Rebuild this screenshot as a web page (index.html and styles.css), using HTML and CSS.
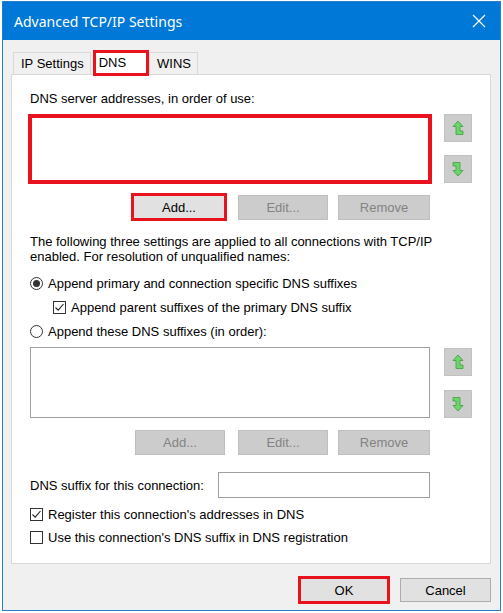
FILE: index.html
```html
<!DOCTYPE html>
<html>
<head>
<meta charset="utf-8">
<link rel="stylesheet" href="styles.css">
</head>
<body>
<div class="window">
  <div class="titlebar">
    <span class="title">Advanced TCP/IP Settings</span>
    <svg class="close" width="14" height="14" viewBox="0 0 14 14"><path d="M1 1L13 13M13 1L1 13" stroke="#fff" stroke-width="1.2" fill="none"/></svg>
  </div>
  <div class="body">
    <div class="tabs">
      <div class="tab">IP Settings</div>
      <div class="tab active">DNS</div>
      <div class="tab">WINS</div>
    </div>
    <div class="panel">
      <div class="label">DNS server addresses, in order of use:</div>
      <div class="listrow">
        <div class="list hl-list"></div>
        <div class="arrows">
          <div class="arrowbtn"><svg width="12" height="16" viewBox="0 0 12 16"><path d="M6 1L11 6.5H8V11H11V14.5H4V6.5H1Z" fill="#6fd46f" stroke="#3c9f3c" stroke-width="0.8" stroke-linejoin="round"/></svg></div>
          <div class="arrowbtn gap1"><svg width="12" height="16" viewBox="0 0 12 16"><path d="M1 1.5H8V9.5H11L6 15L1 9.5H4V5H1Z" fill="#6fd46f" stroke="#3c9f3c" stroke-width="0.8" stroke-linejoin="round"/></svg></div>
        </div>
      </div>
      <div class="btnrow top">
        <div class="hl-btn"><div class="btn">Add...</div></div>
        <div class="btn dis edit">Edit...</div>
        <div class="btn dis remove">Remove</div>
      </div>
      <p class="para">The following three settings are applied to all connections with TCP/IP enabled. For resolution of unqualified names:</p>
      <div class="opt radio1"><span class="radio on"></span>Append primary and connection specific DNS suffixes</div>
      <div class="opt check1 indent"><span class="check"><svg width="11" height="11" viewBox="0 0 11 11"><path d="M1.5 5.5L4.2 8.2L9.5 2" stroke="#222" stroke-width="1.1" fill="none"/></svg></span>Append parent suffixes of the primary DNS suffix</div>
      <div class="opt radio2"><span class="radio"></span>Append these DNS suffixes (in order):</div>
      <div class="listrow second">
        <div class="list plain-list"></div>
        <div class="arrows two">
          <div class="arrowbtn"><svg width="12" height="16" viewBox="0 0 12 16"><path d="M6 1L11 6.5H8V11H11V14.5H4V6.5H1Z" fill="#6fd46f" stroke="#3c9f3c" stroke-width="0.8" stroke-linejoin="round"/></svg></div>
          <div class="arrowbtn gap2"><svg width="12" height="16" viewBox="0 0 12 16"><path d="M1 1.5H8V9.5H11L6 15L1 9.5H4V5H1Z" fill="#6fd46f" stroke="#3c9f3c" stroke-width="0.8" stroke-linejoin="round"/></svg></div>
        </div>
      </div>
      <div class="btnrow bottom">
        <div class="btn dis">Add...</div>
        <div class="btn dis edit">Edit...</div>
        <div class="btn dis remove">Remove</div>
      </div>
      <div class="suffixrow">
        <span>DNS suffix for this connection:</span>
        <div class="input"></div>
      </div>
      <div class="opt check2"><span class="check"><svg width="11" height="11" viewBox="0 0 11 11"><path d="M1.5 5.5L4.2 8.2L9.5 2" stroke="#222" stroke-width="1.1" fill="none"/></svg></span>Register this connection's addresses in DNS</div>
      <div class="opt check3"><span class="check"></span>Use this connection's DNS suffix in DNS registration</div>
    </div>
    <div class="footer">
      <div class="hl-btn ok"><div class="btn">OK</div></div>
      <div class="btn cancel">Cancel</div>
    </div>
  </div>
</div>
</body>
</html>
```
FILE: styles.css
```css
html, body {
  margin: 0;
  padding: 0;
  background: #ffffff;
}
body {
  font-family: "Liberation Sans", Arial, sans-serif;
  font-size: 13px;
  color: #000;
}
.window {
  margin: 1px 0 0 2px;
  width: 499px;
  height: 610px;
  box-sizing: border-box;
  border: 1px solid #2a7ccc;
  background: #f0f0f0;
  display: flex;
  flex-direction: column;
}
.titlebar {
  height: 38px;
  background: #0078d7;
  color: #fff;
  display: flex;
  align-items: center;
  justify-content: space-between;
  padding: 0 14px 0 11px;
  flex: none;
}
.title {
  font-family: "Noto Sans", sans-serif;
  font-size: 14px;
}
.body {
  padding: 12px 9px 0 8px;
  display: flex;
  flex-direction: column;
}
.tabs {
  display: flex;
  height: 22px;
  padding-left: 2px;
  align-items: flex-end;
}
.tab {
  height: 22px;
  box-sizing: border-box;
  border: 1px solid #d9d9d9;
  border-bottom: none;
  background: #f0f0f0;
  padding: 3px 6px 0 7px;
  line-height: 16px;
}
.tab.active {
  height: 26px;
  margin-bottom: -2px;
  background: #fff;
  border: 3px solid #e8131f;
  padding: 2px 20px 0 3px;
  position: relative;
  z-index: 2;
  margin-left: 2px;
}
.panel {
  width: 480px;
  height: 490px;
  box-sizing: border-box;
  background: #fff;
  border: 1px solid #d9d9d9;
  padding: 16px 18px 0 18px;
  display: flex;
  flex-direction: column;
}
.label {
  line-height: 15px;
  height: 15px;
}
.listrow {
  display: flex;
  margin-top: 8px;
}
.list {
  background: #fff;
  box-sizing: border-box;
}
.hl-list {
  width: 404px;
  height: 70px;
  margin-left: -2px;
  border: 4px solid #e8131f;
}
.arrows {
  margin-left: 12px;
  display: flex;
  flex-direction: column;
}
.arrowbtn {
  width: 28px;
  height: 28px;
  box-sizing: border-box;
  background: #cccccc;
  border: 1px solid #c2c2c2;
  display: flex;
  align-items: center;
  justify-content: center;
}
.gap1 { margin-top: 13px; }
.gap2 { margin-top: 14px; }
.listrow.second { margin-top: 7px; }
.plain-list {
  width: 400px;
  height: 71px;
  border: 1px solid #a0a0a0;
}
.arrows.two {
  margin-left: 14px;
  margin-top: 1px;
}
.btnrow {
  display: flex;
  justify-content: flex-end;
  align-items: center;
  padding-right: 42px;
}
.btnrow.top {
  margin-top: 9px;
  height: 28px;
}
.btnrow.bottom {
  margin-top: 12px;
  height: 25px;
}
.btn {
  box-sizing: border-box;
  width: 90px;
  height: 25px;
  border: 1px solid #adadad;
  background: #e1e1e1;
  display: flex;
  align-items: center;
  justify-content: center;
}
.btn.dis {
  background: #cccccc;
  border-color: #bfbfbf;
  color: #838383;
}
.btn.edit { margin-left: 13px; }
.btn.remove { margin-left: 10px; width: 92px; }
.btnrow.top .btn.edit { margin-left: 11px; }
.hl-btn {
  border: 3px solid #e8131f;
  display: flex;
}
.hl-btn .btn {
  border: none;
  height: 22px;
}
.para {
  margin: 13px 0 0 0;
  line-height: 15px;
}
.opt {
  display: flex;
  align-items: center;
  height: 18px;
}
.radio1 { margin-top: 10px; }
.check1 { margin-top: 6px; padding-left: 23px; }
.radio2 { margin-top: 6px; }
.radio {
  width: 13px;
  height: 13px;
  box-sizing: border-box;
  border: 1px solid #333;
  border-radius: 50%;
  margin-right: 5px;
  display: flex;
  align-items: center;
  justify-content: center;
  background: #fff;
}
.radio.on::after {
  content: "";
  width: 7px;
  height: 7px;
  border-radius: 50%;
  background: #333;
}
.check {
  width: 13px;
  height: 13px;
  box-sizing: border-box;
  border: 1px solid #333;
  margin-right: 5px;
  display: flex;
  align-items: center;
  justify-content: center;
  background: #fff;
}
.suffixrow {
  margin-top: 17px;
  display: flex;
  align-items: center;
  justify-content: space-between;
  padding-right: 42px;
  height: 26px;
}
.input {
  width: 212px;
  height: 26px;
  box-sizing: border-box;
  border: 1px solid #a0a0a0;
  background: #fff;
}
.check2 { margin-top: 7px; }
.check3 { margin-top: 5px; }
.footer {
  display: flex;
  justify-content: flex-end;
  align-items: center;
  margin-top: 12px;
  height: 28px;
  padding-right: 0;
}
.hl-btn.ok .btn {
  width: 86px;
}
.btn.cancel {
  margin-left: 10px;
  width: 91px;
  height: 24px;
}
```
